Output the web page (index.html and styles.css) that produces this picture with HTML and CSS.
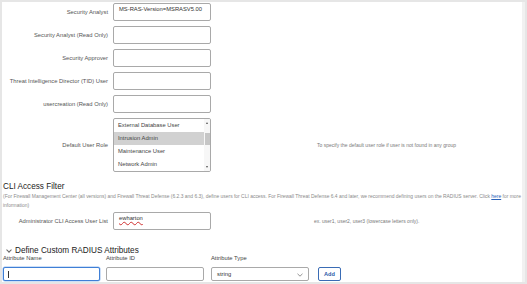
FILE: index.html
```html
<!DOCTYPE html>
<html lang="en">
<head>
  <meta charset="UTF-8" />
  <title>RADIUS User Role Mapping</title>
  <link rel="stylesheet" href="styles.css">
</head>
<body>

<div class="panel">
  <div class="roles">
    <div class="row">
      <label class="lbl">Security Analyst</label>
      <div class="field">MS-RAS-Version=MSRASV5.00</div>
    </div>
    <div class="row">
      <label class="lbl">Security Analyst (Read Only)</label>
      <div class="field"></div>
    </div>
    <div class="row">
      <label class="lbl">Security Approver</label>
      <div class="field"></div>
    </div>
    <div class="row">
      <label class="lbl">Threat Intelligence Director (TID) User</label>
      <div class="field"></div>
    </div>
    <div class="row">
      <label class="lbl">usercreation (Read Only)</label>
      <div class="field"></div>
    </div>
    <div class="row row-list">
      <label class="lbl">Default User Role</label>
      <div class="listbox">
        <div class="options">
          <div class="opt">External Database User</div>
          <div class="opt sel">Intrusion Admin</div>
          <div class="opt">Maintenance User</div>
          <div class="opt">Network Admin</div>
        </div>
        <div class="scroll">
          <span class="arrow up"></span>
          <span class="thumb"></span>
          <span class="arrow down"></span>
        </div>
      </div>
      <span class="hint hint-role">To specify the default user role if user is not found in any group</span>
    </div>
  </div>

  <h2 class="title">CLI Access Filter</h2>
  <p class="desc">(For Firewall Management Center (all versions) and Firewall Threat Defense (6.2.3 and 6.3), define users for CLI access. For Firewall Threat Defense 6.4 and later, we recommend defining users on the RADIUS server. Click <a href="#">here</a> for more<br>information)</p>

  <div class="row row-cli">
    <label class="lbl">Administrator CLI Access User List</label>
    <div class="field"><span class="typo">ewharton</span></div>
    <span class="hint hint-cli">ex. user1, user2, user3 (lowercase letters only).</span>
  </div>

  <h2 class="title title-attr"><span class="chev"></span>Define Custom RADIUS Attributes</h2>
  <div class="attr">
    <div class="col col-name">
      <label class="sm">Attribute Name</label>
      <div class="field small focus"><span class="caret"></span></div>
    </div>
    <div class="col col-id">
      <label class="sm">Attribute ID</label>
      <div class="field small"></div>
    </div>
    <div class="col col-type">
      <label class="sm">Attribute Type</label>
      <div class="field small dropdown">string
        <svg class="dd" width="6" height="4" viewBox="0 0 6 4"><path d="M0.5 0.8 L3 3.2 L5.5 0.8" fill="none" stroke="#777" stroke-width="0.8"/></svg>
      </div>
    </div>
    <div class="col col-btn">
      <button class="btn">Add</button>
    </div>
  </div>
</div>

</body>
</html>
```

FILE: styles.css
```css
body {
  margin: 0;
  background-color: #e6e6e6;
  font-family: "Liberation Sans", Arial, sans-serif;
  color: #333;
}
.panel {
  margin: 2px 2px 0 2px;
  height: 280px;
  background: white;
  padding: 1px 0 0 1px;
  box-sizing: border-box;
  border-right: 3px solid #f1f1f1;
  overflow: hidden;
}
.row {
  display: flex;
  align-items: center;
  height: 18px;
  margin-bottom: 5px;
}
.lbl {
  width: 105px;
  flex: none;
  text-align: right;
  font-size: 5.8px;
  color: #555;
  margin-right: 5px;
}
.field {
  width: 98px;
  height: 18px;
  flex: none;
  box-sizing: border-box;
  border: 1px solid #a9a9a9;
  border-radius: 2px;
  font-size: 5.8px;
  color: #333;
  padding: 2px 0 0 5px;
  background: white;
}
.row-list {
  height: 54px;
  margin-bottom: 0;
}
.listbox {
  width: 98px;
  height: 54px;
  box-sizing: border-box;
  border: 1px solid #a9a9a9;
  border-radius: 2px;
  display: flex;
  flex: none;
  overflow: hidden;
}
.options {
  flex: 1;
}
.opt {
  height: 13px;
  line-height: 13px;
  font-size: 5.8px;
  color: #444;
  padding-left: 4px;
}
.opt.sel {
  background: #d1d1d1;
}
.scroll {
  width: 6px;
  display: flex;
  flex-direction: column;
  align-items: center;
  background: #f7f7f7;
}
.arrow {
  width: 0;
  height: 0;
  border-left: 1.2px solid transparent;
  border-right: 1.2px solid transparent;
  margin: 3px 0;
}
.arrow.up {
  border-bottom: 2px solid #555;
}
.arrow.down {
  border-top: 2px solid #555;
  margin-top: auto;
}
.thumb {
  width: 5px;
  height: 12px;
  background: #c6c6c6;
  margin-top: 6px;
}
.hint {
  font-size: 5px;
  color: #7a7a7a;
}
.hint-role {
  margin-left: 106px;
}
.hint-cli {
  margin-left: 103px;
}
.title {
  font-size: 8.2px;
  font-weight: normal;
  color: #222;
  margin: 10px 0 0 0;
  line-height: 10px;
}
.desc {
  font-size: 4.95px;
  color: #8a8a8a;
  margin: 0;
  line-height: 9px;
  white-space: nowrap;
}
.desc a {
  color: #2a62b8;
}
.row-cli {
  margin-top: 2px;
  height: 18px;
}
.typo {
  text-decoration: underline wavy #d03030;
  text-decoration-thickness: 0.5px;
  color: #333;
}
.title-attr {
  margin-top: 16px;
  display: flex;
  align-items: center;
}
.chev {
  width: 3px;
  height: 3px;
  border-right: 0.8px solid #666;
  border-bottom: 0.8px solid #666;
  transform: rotate(45deg);
  margin: -3px 4px 0 4px;
}
.attr {
  display: flex;
  margin-top: -2px;
}
.col {
  display: flex;
  flex-direction: column;
}
.col-name { margin-right: 6px; }
.col-id { margin-right: 7px; }
.col-type { margin-right: 9px; }
.sm {
  font-size: 5.8px;
  color: #444;
  height: 9px;
  line-height: 9px;
  margin-bottom: 4px;
}
.field.small {
  height: 14px;
  padding-top: 1px;
  line-height: 11px;
}
.col-name .field { width: 97px; }
.focus {
  border-color: #3f7fd6;
  box-shadow: 0 0 0 0.5px #9cc0ef;
}
.caret {
  display: inline-block;
  width: 1px;
  height: 7px;
  background: #333;
  margin: 2px 0 0 -1px;
}
.dropdown {
  position: relative;
}
.dd {
  position: absolute;
  right: 5px;
  top: 5px;
}
.col-btn {
  justify-content: flex-end;
}
.btn {
  width: 23px;
  height: 14px;
  padding: 0;
  border: 1px solid #3a6cb5;
  border-radius: 2px;
  background: white;
  color: #2a5aa8;
  font-family: "Liberation Sans", Arial, sans-serif;
  font-size: 5.6px;
  font-weight: bold;
}
```
